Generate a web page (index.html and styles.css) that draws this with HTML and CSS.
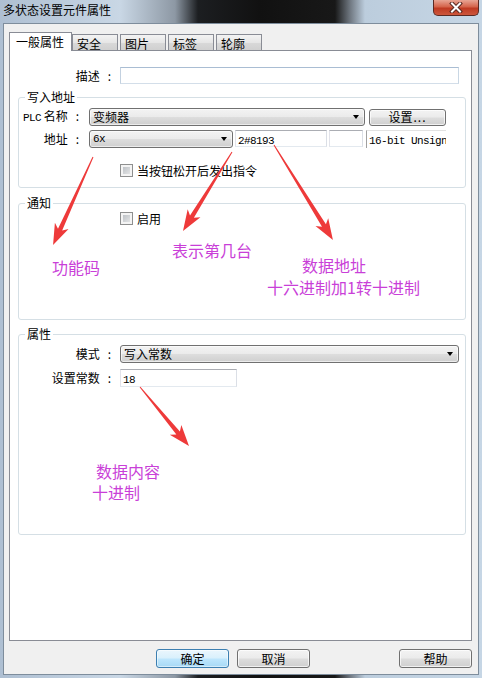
FILE: index.html
```html
<!DOCTYPE html>
<html lang="zh-CN">
<head>
  <meta charset="UTF-8" />
  <title>多状态设置元件属性</title>
  <link rel="stylesheet" href="styles.css">
</head>
<body>
  <div class="window">
    <div class="titlebar">
      <span class="title">多状态设置元件属性</span>
      <span class="close-btn">
        <svg width="14" height="11" viewBox="0 0 14 11">
          <path d="M3 1.5 L11 9.5 M11 1.5 L3 9.5" stroke="#5a2a22" stroke-width="4" stroke-linecap="square"/>
          <path d="M3 1.5 L11 9.5 M11 1.5 L3 9.5" stroke="#fff" stroke-width="2" stroke-linecap="square"/>
        </svg>
      </span>
    </div>

    <div class="client">
      <div class="tabs">
        <div class="tab active">一般属性</div>
        <div class="tab">安全</div>
        <div class="tab">图片</div>
        <div class="tab">标签</div>
        <div class="tab">轮廓</div>
      </div>

      <div class="tab-panel">
        <div class="desc-row">
          <label class="lbl">描述<span class="colon">:</span></label>
          <div class="textbox desc-box"></div>
        </div>

        <!-- 写入地址 -->
        <fieldset class="group write-group">
          <legend>写入地址</legend>
          <div class="g-row">
            <label class="lbl"><span class="mono">PLC</span> 名称<span class="colon">:</span></label>
            <div class="ctrls">
              <div class="combo plc-combo"><span class="combo-text">变频器</span><span class="caret"></span></div>
              <button class="btn set-btn">设置<span class="dots">...</span></button>
            </div>
          </div>
          <div class="g-row">
            <label class="lbl">地址<span class="colon">:</span></label>
            <div class="ctrls addr-ctrls">
              <div class="combo addr-combo"><span class="combo-text mono">6x</span><span class="caret"></span></div>
              <div class="textbox addr-box"><span class="mono">2#8193</span></div>
              <div class="textbox small-box"></div>
              <div class="unit-box"><span class="mono">16-bit Unsign</span></div>
            </div>
          </div>
          <div class="check-row release-row">
            <span class="check"></span>
            <span>当按钮松开后发出指令</span>
          </div>
        </fieldset>

        <!-- 通知 -->
        <fieldset class="group notify-group">
          <legend>通知</legend>
          <div class="group-body notify-body">
            <div class="check-row">
              <span class="check"></span>
              <span>启用</span>
            </div>
          </div>
        </fieldset>

        <!-- 属性 -->
        <fieldset class="group prop-group">
          <legend>属性</legend>
          <div class="group-body prop-body">
            <div class="p-row mode-row">
              <label class="lbl">模式<span class="colon">:</span></label>
              <div class="combo mode-combo"><span class="combo-text">写入常数</span><span class="caret"></span></div>
            </div>
            <div class="p-row const-row">
              <label class="lbl">设置常数<span class="colon">:</span></label>
              <div class="textbox const-box"><span class="mono">18</span></div>
            </div>
          </div>
        </fieldset>
      </div>

      <div class="buttons">
        <button class="btn dlg-btn default">确定</button>
        <button class="btn dlg-btn">取消</button>
        <button class="btn dlg-btn help-btn">帮助</button>
      </div>
    </div>

    <!-- annotations drawn over the dialog -->
    <svg class="arrows" width="482" height="678" viewBox="0 0 482 678">
      <g fill="#ee3a3a">
        <polygon transform="translate(93 157) rotate(114.4)" points="0,-0.5 79.7,-2.3 75.7,-7.5 96.7,0 75.7,7.5 79.7,2.3 0,0.5"/>
        <polygon transform="translate(232 152) rotate(121.8)" points="0,-0.5 76,-2.3 72,-7.5 93,0 72,7.5 76,2.3 0,0.5"/>
        <polygon transform="translate(274 145) rotate(58.2)" points="0,-0.5 94.8,-2.3 90.8,-7.5 111.8,0 90.8,7.5 94.8,2.3 0,0.5"/>
        <polygon transform="translate(140 387) rotate(50.3)" points="0,-0.5 59.7,-2.3 55.7,-7.5 76.7,0 55.7,7.5 59.7,2.3 0,0.5"/>
      </g>
    </svg>
    <span class="note note-fn">功能码</span>
    <span class="note note-station">表示第几台</span>
    <span class="note note-addr">数据地址</span>
    <span class="note note-addr2">十六进制加1转十进制</span>
    <span class="note note-data">数据内容</span>
    <span class="note note-data2">十进制</span>
  </div>
</body>
</html>
```

FILE: styles.css
```css
:root {
  --ctl-border: #707070;
  --tab-border: #898c95;
  --group-border: #d5dfe5;
  --note-color: #c93fd8;
  --btn-face: linear-gradient(#f3f3f3 0%, #ebebeb 48%, #dddddd 52%, #cfcfcf 100%);
}

body {
  margin: 0;
  font-family: "Noto Sans CJK SC", "Liberation Sans", sans-serif;
  font-size: 12px;
  color: #000;
}

.window {
  position: relative;
  width: 482px;
  height: 678px;
  display: flex;
  flex-direction: column;
  overflow: hidden;
  background: linear-gradient(90deg, #aebfd2 0, #c9d7e5 120px, #8d98a4 175px, #1c1e21 198px,
    #111 260px, #181818 335px, #6f7780 350px, #bccddd 365px, #c6d6e5 100%);
}

/* title bar */
.titlebar {
  height: 23px;
  display: flex;
  align-items: flex-start;
  padding: 0 3px;
}

.title {
  margin-top: 4px;
  line-height: 12px;
}

.close-btn {
  margin-left: auto;
  width: 46px;
  height: 16px;
  box-sizing: border-box;
  border: 1px solid #5b2a23;
  border-top: none;
  border-radius: 0 0 5px 5px;
  background: linear-gradient(#e8a594, #d5644b 45%, #bf3a22 55%, #cc563c);
  display: flex;
  align-items: center;
  justify-content: center;
}

/* client area */
.client {
  flex: 1;
  margin: 0 3px 3px;
  border: 1px solid #7e8d9c;
  background: #f0f0f0;
  padding: 8px 6px 0 5px;
  display: flex;
  flex-direction: column;
}

.tabs {
  display: flex;
  align-items: flex-end;
  height: 18px;
  position: relative;
  z-index: 1;
}

.tab {
  width: 46px;
  height: 16px;
  box-sizing: border-box;
  border: 1px solid var(--tab-border);
  border-bottom: none;
  margin-left: 2px;
  padding: 2px 0 0 4px;
  line-height: 13px;
  background: linear-gradient(#f3f3f3, #e6e6e6 50%, #d9d9d9 51%, #d0d0d0);
}

.tab.active {
  width: 63px;
  height: 19px;
  margin: 0 0 -1px;
  padding: 2px 0 0 6px;
  line-height: 14px;
  background: #fff;
}

.tab.active + .tab {
  margin-left: 0;
}

.tab-panel {
  height: 591px;
  box-sizing: border-box;
  border: 1px solid var(--tab-border);
  background: #fff;
}

/* form bits */
.lbl {
  text-align: right;
  white-space: nowrap;
  line-height: 14px;
}

.colon {
  margin: 0 2px 0 8px;
}

.mono {
  font-family: "Liberation Mono", "Noto Sans CJK SC", monospace;
  font-size: 11px;
  letter-spacing: -0.6px;
}

.textbox {
  height: 17px;
  box-sizing: border-box;
  border: 1px solid;
  border-color: #abadb3 #dbdfe6 #e3e9ef #e2e3ea;
  background: #fff;
  padding-left: 2px;
  line-height: 15px;
}

.combo {
  height: 18px;
  box-sizing: border-box;
  border: 1px solid var(--ctl-border);
  border-radius: 3px;
  background: var(--btn-face);
  box-shadow: inset 0 0 0 1px rgba(255, 255, 255, 0.6);
  display: flex;
  align-items: center;
  padding: 0 5px 0 3px;
}

.combo-text {
  flex: 1;
  line-height: 14px;
}

.caret {
  width: 0;
  height: 0;
  border-left: 3.5px solid transparent;
  border-right: 3.5px solid transparent;
  border-top: 4px solid #000;
}

.btn {
  box-sizing: border-box;
  border: 1px solid var(--ctl-border);
  border-radius: 3px;
  background: var(--btn-face);
  box-shadow: inset 0 0 0 1px rgba(255, 255, 255, 0.7);
  font: inherit;
  color: #000;
  padding: 0;
  line-height: 14px;
}

.check-row {
  display: flex;
  align-items: center;
  gap: 4px;
  height: 13px;
  line-height: 13px;
  margin-left: 101px;
}

.check {
  width: 13px;
  height: 13px;
  box-sizing: border-box;
  border: 1px solid #8e8f8f;
  background: linear-gradient(135deg, #b3b8be, #eeeeee);
  box-shadow: inset 0 0 0 2px #f4f4f4;
}

/* description */
.desc-row {
  display: grid;
  grid-template-columns: 103px 339px;
  column-gap: 7px;
  align-items: center;
  height: 17px;
  margin-top: 16px;
}

.desc-box {
  border-color: #a9bdd3 #c9d7e4 #d3dee9 #c3d1e0;
}

/* group boxes */
.group {
  margin: 6px 5px 0 8px;
  padding: 0;
  border: 1px solid var(--group-border);
  border-radius: 3px;
  min-width: 0;
}

.group legend {
  margin-left: 6px;
  padding: 0 2px;
  line-height: 14px;
}

.write-group {
  padding-bottom: 10px;
}

.g-row {
  display: grid;
  grid-template-columns: 62px auto;
  column-gap: 8px;
  align-items: center;
  height: 18px;
  margin-top: 4px;
}

.ctrls {
  display: flex;
  align-items: center;
  gap: 4px;
}

.plc-combo { width: 276px; }

.set-btn {
  width: 77px;
  height: 17px;
}

.dots {
  letter-spacing: 1px;
  margin-left: 1px;
}

.addr-ctrls {
  gap: 2px;
  align-items: flex-start;
}

.addr-combo { width: 144px; }

.addr-box { width: 92px; }

.small-box { width: 34px; }

.unit-box {
  width: 80px;
  height: 18px;
  margin-left: 1px;
  box-sizing: border-box;
  border-left: 1px solid #a0a0a0;
  border-top: 1px solid #e2e2e2;
  background: #fff;
  padding-left: 2px;
  line-height: 15px;
  overflow: hidden;
  white-space: nowrap;
}

.release-row {
  margin-top: 16px;
}

.notify-group {
  margin-top: 8px;
}

.notify-body {
  height: 109px;
}

.notify-body .check-row {
  padding-top: 2px;
}

.prop-group {
  margin-top: 7px;
}

.prop-body {
  height: 189px;
}

.p-row {
  display: grid;
  grid-template-columns: 94px auto;
  column-gap: 7px;
  align-items: center;
  height: 18px;
}

.mode-row { margin-top: 4px; }
.const-row { margin-top: 6px; }

.mode-combo { width: 339px; }

.const-box {
  width: 117px;
  height: 18px;
}

/* dialog buttons */
.buttons {
  display: flex;
  gap: 8px;
  margin: 8px 0 0 147px;
}

.dlg-btn {
  width: 73px;
  height: 19px;
}

.dlg-btn.default {
  border-color: #3c7fb1;
  background: linear-gradient(#eaf6fd, #d9f0fc 48%, #bee6fd 52%, #a7d9f5);
  box-shadow: inset 0 0 0 1px rgba(255, 255, 255, 0.5);
}

.help-btn {
  margin-left: auto;
}

/* annotations */
.arrows {
  position: absolute;
  left: 0;
  top: 0;
  pointer-events: none;
}

.note {
  position: absolute;
  color: var(--note-color);
  font-size: 16px;
  line-height: 16px;
  white-space: nowrap;
}

.note-fn { left: 52px; top: 259px; }
.note-station { left: 172px; top: 242px; }
.note-addr { left: 302px; top: 257px; }
.note-addr2 { left: 267px; top: 279px; }
.note-data { left: 96px; top: 463px; }
.note-data2 { left: 92px; top: 484px; }
```
